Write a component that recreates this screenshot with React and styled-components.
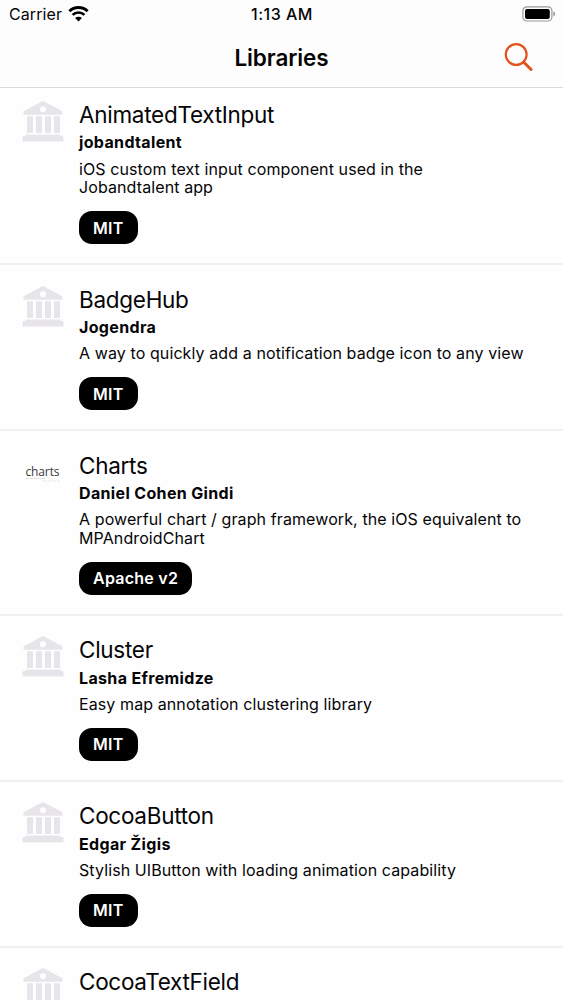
import React from 'react';
import styled, { createGlobalStyle } from 'styled-components';

const colors = {
    background: '#fefefe',
    bar: '#fefdfe',
    bar_line: '#d9d9da',
    separator: '#f0f0f1',
    text: '#050507',
    accent: '#e2521a',
    placeholder: '#e7e5e9',
};

const GlobalStyle = createGlobalStyle`
    * {
        box-sizing: border-box;
    }
    body {
        margin: 0;
        background: ${colors.background};
        color: ${colors.text};
        font-family: 'Inter', 'Liberation Sans', sans-serif;
    }
`;

const Screen = styled.div`
    display: flex;
    flex-direction: column;
    height: 100vh;
    overflow: hidden;
`;

const Header = styled.header`
    flex: none;
    height: 88px;
    background: ${colors.bar};
    border-bottom: 1px solid ${colors.bar_line};
`;

const StatusBar = styled.div`
    display: grid;
    grid-template-columns: 1fr auto 1fr;
    align-items: center;
    height: 28px;
    padding: 0 8px 0 9px;
    font-size: 16px;
    line-height: 28px;
`;

const Carrier = styled.div`
    display: flex;
    align-items: center;
    gap: 6px;
    letter-spacing: 0.1px;
`;

const Clock = styled.div`
    font-weight: 500;
    letter-spacing: 0.5px;
`;

const Battery = styled.div`
    display: flex;
    justify-content: flex-end;
    margin-right: -1px;
`;

const NavBar = styled.div`
    display: grid;
    grid-template-columns: 1fr auto 1fr;
    align-items: center;
    height: 59px;
    padding: 0 29px;
`;

const NavTitle = styled.h1`
    grid-column: 2;
    margin: 0;
    font-size: 22.5px;
    line-height: 28px;
    font-weight: 600;
    letter-spacing: -0.1px;
`;

const SearchButton = styled.button`
    justify-self: end;
    display: flex;
    padding: 0;
    border: 0;
    background: none;
    color: ${colors.accent};
`;

const ListViewport = styled.main`
    flex: 1;
    min-height: 0;
    overflow: hidden;
`;

// the list is scrolled a little under the header
const List = styled.ul`
    margin: -7.8px 0 0;
    padding: 0;
    list-style: none;
`;

const Row = styled.li`
    display: flex;
    gap: 15px;
    padding: 20.6px 22px 18.8px;
    border-bottom: 2px solid ${colors.separator};
`;

const Thumb = styled.div`
    flex: none;
    width: 42px;
    height: 42px;
`;

const Info = styled.div`
    flex: 1;
    min-width: 0;
`;

const Name = styled.h2`
    margin: 0;
    font-size: 22.5px;
    line-height: 28px;
    font-weight: 400;
    letter-spacing: -0.28px;
`;

const Owner = styled.div`
    margin-top: 3.4px;
    font-size: 16px;
    line-height: 20px;
    font-weight: 700;
    letter-spacing: 0.35px;
`;

const Description = styled.p`
    max-width: 446.5px;
    margin: 7.4px 0 14px;
    font-size: 16px;
    line-height: 18.8px;
    letter-spacing: 0.1px;
`;

const License = styled.span`
    display: flex;
    align-items: center;
    width: fit-content;
    height: 33px;
    padding: 0 14px;
    border-radius: 13px;
    background: #000;
    color: #fff;
    font-size: 16px;
    font-weight: 600;
    letter-spacing: 0.25px;
`;

const WifiIcon = () => (
    <svg width="21" height="16" viewBox="0 0 21 16" fill="none">
        <path d="M1.4 5.3a13 13 0 0 1 18.2 0" stroke="#000" strokeWidth="3" />
        <path d="M4.6 8.9a8.4 8.4 0 0 1 11.8 0" stroke="#000" strokeWidth="2.7" />
        <path d="M7.1 12.1a4.9 4.9 0 0 1 6.8 0l-3.4 3.3z" fill="#000" />
    </svg>
);

const BatteryIcon = () => (
    <svg width="34" height="16" viewBox="0 0 34 16">
        <rect x="0.9" y="0.8" width="29" height="14.2" rx="4" fill="none" stroke="#98989a" strokeWidth="1.2" />
        <rect x="3" y="3" width="24.8" height="10" rx="2" fill="#000" />
        <path d="M31.4 5.3c2.1 1 2.1 4.2 0 5.2z" fill="#8d8d8f" />
    </svg>
);

const SearchIcon = () => (
    <svg width="30" height="30" viewBox="0 0 30 30" fill="none" stroke="currentColor">
        <circle cx="12.2" cy="11.5" r="10.4" strokeWidth="2.2" />
        <path d="M19.8 19.2l7.3 7.3" strokeWidth="3" strokeLinecap="round" />
    </svg>
);

const InstitutionIcon = () => (
    <svg width="42" height="42" viewBox="0 0 42 42" fill={colors.placeholder}>
        <path
            fillRule="evenodd"
            d="M21 .3c.6 0 1 .1 1.5.4L39 9.4c1.3.7 1.5 1.1 1.5 2v2.4h-39v-2.4c0-.9.2-1.3 1.5-2L19.5.7c.5-.3.9-.4 1.5-.4zM21 5.2a3 3 0 1 0 0 6 3 3 0 0 0 0-6z"
        />
        <path d="M5 15.2h6V32H5zM14 15.2h6V32h-6zM23 15.2h6V32h-6zM32 15.2h6V32h-6z" />
        <path d="M3.5 33.5h35V35H40c1 0 1.5.5 1.5 1.5v4H.5v-4c0-1 .5-1.5 1.5-1.5h1.5z" />
    </svg>
);

const ChartsLogo = () => (
    <svg width="42" height="42" viewBox="0 0 42 42">
        <text x="3.5" y="23.5" fontFamily="Open Sans, sans-serif" fontSize="12" fontWeight="400" textLength="34" fill="#3a3a3a">
            charts
        </text>
        <path d="M4 26.5h20" stroke="#d4d4d6" strokeWidth="0.8" strokeDasharray="3 1" />
        <path d="M20 29h18" stroke="#e2e2e3" strokeWidth="0.8" strokeDasharray="4 1" />
    </svg>
);

const libraries = [
    {
        name: 'AnimatedTextInput',
        owner: 'jobandtalent',
        description: 'iOS custom text input component used in the Jobandtalent app',
        license: 'MIT',
    },
    {
        name: 'BadgeHub',
        owner: 'Jogendra',
        description: 'A way to quickly add a notification badge icon to any view',
        license: 'MIT',
    },
    {
        name: 'Charts',
        owner: 'Daniel Cohen Gindi',
        description: 'A powerful chart / graph framework, the iOS equivalent to MPAndroidChart',
        license: 'Apache v2',
        logo: ChartsLogo,
    },
    {
        name: 'Cluster',
        owner: 'Lasha Efremidze',
        description: 'Easy map annotation clustering library',
        license: 'MIT',
    },
    {
        name: 'CocoaButton',
        owner: 'Edgar Žigis',
        description: 'Stylish UIButton with loading animation capability',
        license: 'MIT',
    },
    {
        name: 'CocoaTextField',
    },
];

const LibraryRow = ({ name, owner, description, license, logo: Logo = InstitutionIcon }) => (
    <Row>
        <Thumb>
            <Logo />
        </Thumb>
        <Info>
            <Name>{name}</Name>
            {owner && <Owner>{owner}</Owner>}
            {description && <Description>{description}</Description>}
            {license && <License>{license}</License>}
        </Info>
    </Row>
);

const App = () => (
    <Screen>
        <GlobalStyle />
        <Header>
            <StatusBar>
                <Carrier>
                    Carrier
                    <WifiIcon />
                </Carrier>
                <Clock>1:13 AM</Clock>
                <Battery>
                    <BatteryIcon />
                </Battery>
            </StatusBar>
            <NavBar>
                <NavTitle>Libraries</NavTitle>
                <SearchButton aria-label="Search">
                    <SearchIcon />
                </SearchButton>
            </NavBar>
        </Header>
        <ListViewport>
            <List>
                {libraries.map((library) => (
                    <LibraryRow key={library.name} {...library} />
                ))}
            </List>
        </ListViewport>
    </Screen>
);

export default App;
